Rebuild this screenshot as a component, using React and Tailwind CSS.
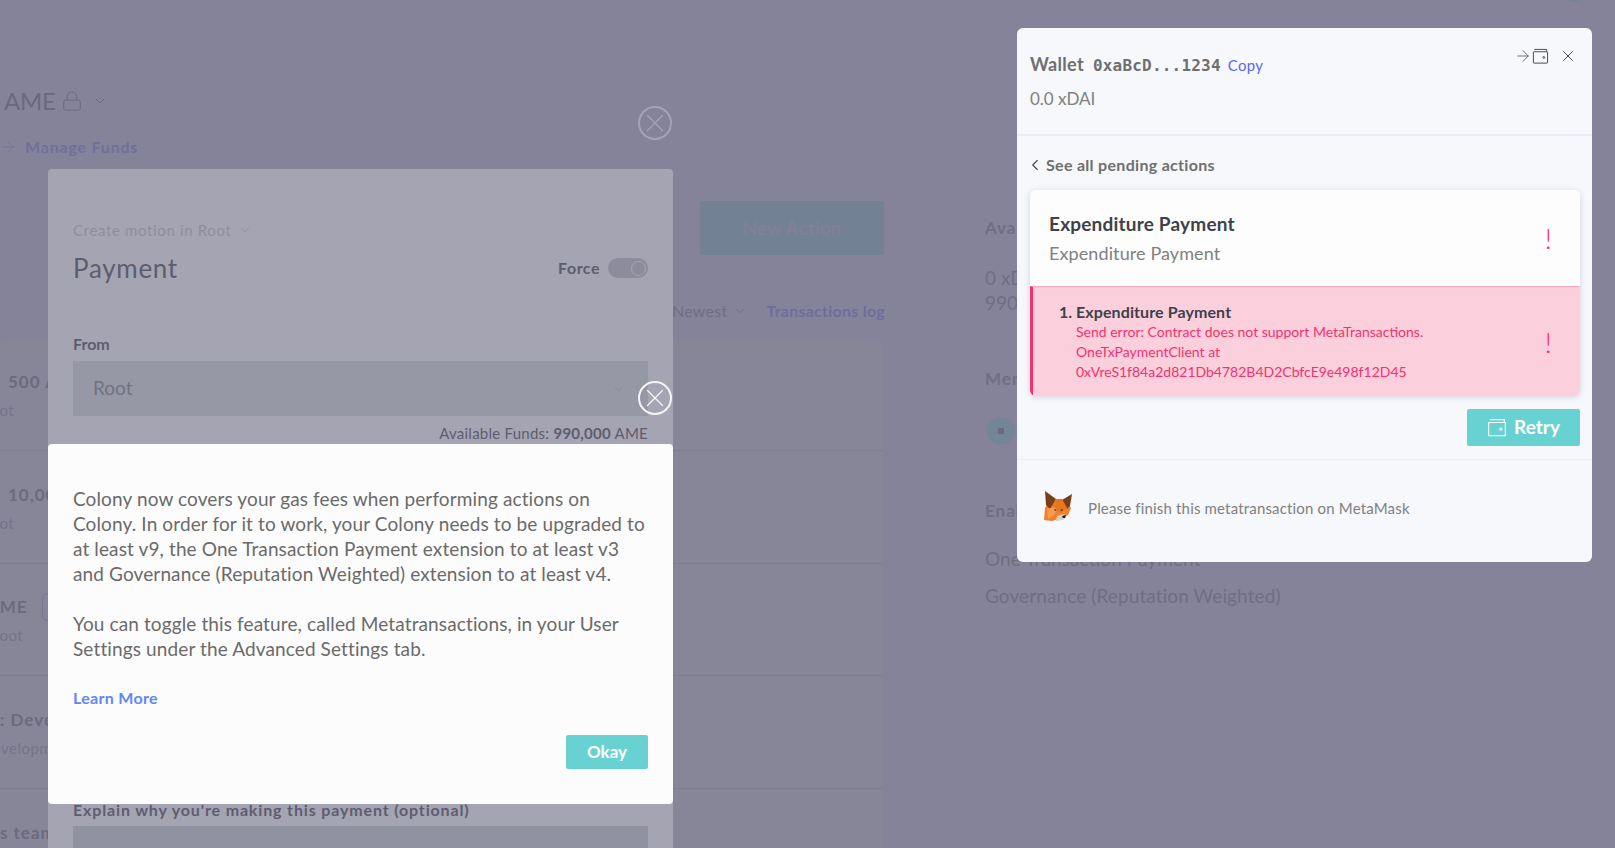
import React from "react";
import { ArrowRight, ChevronDown, ChevronLeft, Lock, X } from "lucide-react";

const font = "font-['Lato','Noto_Sans',sans-serif]";

const WalletIcon = ({ className }) => (
  <svg viewBox="0 0 18 18" fill="none" stroke="currentColor" strokeWidth="1" className={className}>
    <path d="M2.5 1.5h13v2.5" />
    <rect x="1.5" y="4" width="15" height="12" rx="0.5" />
    <circle cx="12.5" cy="10" r="1" />
  </svg>
);

const FoxLogo = () => (
  <svg viewBox="0 0 30 31" className="w-[30px] h-[31px] shrink-0">
    <path d="M1 30l1-12 4-6 9-3 9 3 4 6-3 7-5 3-5 1-6 2z" fill="#f0802c" />
    <path d="M2 1l11 8-6 10-4-4z" fill="#7a3e17" />
    <path d="M29 4l-10 6 5 9 3-3z" fill="#7a3e17" />
    <path d="M13 9h6l5 9-6 5-4-3-5-3z" fill="#e8761f" />
    <path d="M4 19l7-2 3 3-3 5-6 4z" fill="#f79a4b" />
    <path d="M14 26l7-2 3 2-4 4-7 1z" fill="#d9cfc4" />
    <path d="M19 26l4-1-1 3-2 0z" fill="#1c1c1c" />
    <path d="M11 19l3 1-2 1zM20 19l-3 1 2 1z" fill="#333333" />
  </svg>
);

const CloseCircle = ({ className }) => (
  <button className={`absolute left-[638px] w-[34px] h-[34px] rounded-full border-2 flex items-center justify-center ${className}`}>
    <X className="w-[30px] h-[30px] shrink-0" strokeWidth={1} />
  </button>
);

const Row = ({ children, sub, subClass, className }) => (
  <div className={`shrink-0 border-b border-[#7f7d92] bg-[#878698] ${className}`}>
    <div className="flex items-center h-[22px] text-[17px] font-bold tracking-[1px] text-[#6c6a7e] whitespace-nowrap">{children}</div>
    <p className={`mt-[6px] h-[22px] text-[15px] leading-[22px] tracking-[0.5px] text-[#757389] whitespace-nowrap ${subClass}`}>{sub}</p>
  </div>
);

const Page = () => (
  <div className="flex">
    <div className="w-[883px] shrink-0 pt-[86px] flex flex-col">
      <div className="flex items-center pl-[4px] h-[30px] text-[24px] tracking-[-0.3px] text-[#6b697d]">
        <span>AME</span>
        <Lock className="w-[22px] h-[22px] ml-[5px]" strokeWidth={1} />
        <ChevronDown className="w-[16px] h-[16px] ml-[9px]" strokeWidth={1.5} />
      </div>
      <div className="flex items-center gap-[8px] mt-[19px] h-[24px] text-[16px] tracking-[0.8px] font-bold text-[#70709a]">
        <ArrowRight className="w-[18px] h-[18px] -ml-[1px]" strokeWidth={1} />
        <span>Manage Funds</span>
      </div>
      <div className="flex justify-end mt-[42px]">
        <div className="w-[184px] h-[54px] -mr-[1px] rounded-[3px] bg-[#738195] flex items-center justify-center text-[19px] font-bold text-[#81809a]">
          New Action
        </div>
      </div>
      <div className="flex justify-end items-center mt-[44px] h-[24px] text-[16px] tracking-[0.25px] -mr-[2px]">
        <span className="text-[#706e83]">Newest</span>
        <ChevronDown className="w-[14px] h-[14px] ml-[6px] text-[#706e83]" strokeWidth={1.5} />
        <span className="ml-[19px] font-bold text-[#6e6e9e]">Transactions log</span>
      </div>
      <div className="mt-[18px] flex flex-col rounded-t-[6px] overflow-hidden">
        <Row className="h-[110px] pt-[30px]" sub="Root" subClass="-ml-[19px]">
          <span className="ml-[8px]">500 AME</span>
        </Row>
        <Row className="h-[113px] pt-[33px]" sub="Root" subClass="-ml-[19px]">
          <span className="ml-[8px]">10,000 AME</span>
        </Row>
        <Row className="h-[112px] pt-[32px]" sub="Root" subClass="-ml-[10px]">
          <span className="-ml-[13px]">AME</span>
          <span className="ml-[14px] w-[40px] h-[28px] rounded-[6px] border border-[#74739c]" />
        </Row>
        <Row className="h-[113px] pt-[33px]" sub="Development" subClass="-ml-[19px]">
          <span>: Development</span>
        </Row>
        <Row className="h-[60px] pt-[33px] border-b-0" sub="" subClass="">
          <span>s team</span>
        </Row>
      </div>
    </div>
    <div className="pl-[102px] pt-[216px] flex flex-col text-[#706e83]">
      <p className="text-[17px] leading-[24px] tracking-[1px] font-bold">Available Funds</p>
      <p className="mt-[25px] text-[19px] leading-[25px]">0 xDAI</p>
      <p className="text-[19px] leading-[25px]">990,000 AME</p>
      <p className="mt-[52px] text-[17px] leading-[24px] tracking-[1px] font-bold">Members</p>
      <div className="mt-[26px] ml-[2px] w-[28px] h-[28px] rounded-full bg-[#74859a] flex items-center justify-center">
        <div className="w-[6px] h-[6px] bg-[#6b697d]" />
      </div>
      <p className="mt-[54px] text-[17px] leading-[24px] tracking-[1px] font-bold">Enabled Extensions</p>
      <p className="mt-[23px] text-[19px] leading-[26px] tracking-[0.1px]">One Transaction Payment</p>
      <p className="mt-[11px] text-[19px] leading-[26px] tracking-[0.1px]">Governance (Reputation Weighted)</p>
    </div>
  </div>
);

const BackModal = () => (
  <div className="absolute left-[48px] top-[169px] w-[625px] h-[700px] rounded-t-[4px] bg-[#a5a4b2] px-[25px] pt-[51px]">
    <div className="flex items-center h-[20px] text-[15px] tracking-[0.65px] text-[#8f8e9e]">
      <span>Create motion in Root</span>
      <ChevronDown className="w-[14px] h-[14px] ml-[6px]" strokeWidth={1.5} />
    </div>
    <div className="flex items-center justify-between mt-[10px] h-[36px]">
      <h2 className="text-[26px] text-[#5e5d70] tracking-[0.7px]">Payment</h2>
      <div className="flex items-center gap-[8px]">
        <span className="text-[16px] tracking-[0.5px] font-bold text-[#5e5d70]">Force</span>
        <div className="w-[40px] h-[20px] rounded-full bg-[#8d8c9d] flex items-center justify-end pr-[2px]">
          <div className="w-[15px] h-[15px] rounded-full border border-[#a5a4b2]" />
        </div>
      </div>
    </div>
    <p className="mt-[46px] text-[16px] leading-[24px] font-bold text-[#5e5d70]">From</p>
    <div className="mt-[5px] h-[55px] bg-[#9798a6] flex items-center justify-between px-[20px]">
      <span className="text-[19px] text-[#727183]">Root</span>
      <ChevronDown className="w-[14px] h-[14px] text-[#85848f] mr-[2px]" strokeWidth={1.5} />
    </div>
    <p className="mt-[8px] text-right text-[15px] tracking-[0.25px] leading-[18px] text-[#5e5d70]">
      Available Funds: <span className="font-bold">990,000</span> AME
    </p>
    <p className="mt-[356px] text-[16px] tracking-[0.85px] leading-[24px] font-bold text-[#5e5d70]">Explain why you&apos;re making this payment (optional)</p>
    <div className="mt-[4px] h-[60px] bg-[#9192a1]" />
  </div>
);

const FrontModal = () => (
  <div className="absolute left-[48px] top-[444px] w-[625px] h-[360px] rounded-[4px] bg-[#fcfcfc] px-[25px] pt-[42px]">
    <p className="text-[19px] tracking-[0.12px] leading-[25px] text-[#6b6a6a] whitespace-nowrap">
      Colony now covers your gas fees when performing actions on
      <br />
      Colony. In order for it to work, your Colony needs to be upgraded to
      <br />
      at least v9, the One Transaction Payment extension to at least v3
      <br />
      and Governance (Reputation Weighted) extension to at least v4.
    </p>
    <p className="mt-[25px] text-[19px] tracking-[0.12px] leading-[25px] text-[#6b6a6a] whitespace-nowrap">
      You can toggle this feature, called Metatransactions, in your User
      <br />
      Settings under the Advanced Settings tab.
    </p>
    <p className="mt-[25px] text-[16px] tracking-[0.3px] leading-[24px] font-bold text-[#5f88f5]">Learn More</p>
    <div className="flex justify-end mt-[25px]">
      <button className="w-[82px] h-[34px] rounded-[2px] bg-[#68d2d2] text-[17px] font-bold text-white">Okay</button>
    </div>
  </div>
);

const WalletPanel = () => (
  <div className="absolute left-[1017px] top-[28px] w-[575px] h-[534px] rounded-[6px] bg-[#f6f8fc] flex flex-col">
    <div className="h-[108px] shrink-0 border-b-2 border-[#e9eef5] px-[13px] pt-[23px] relative">
      <div className="flex items-baseline h-[24px] text-[#6f6f6f]">
        <span className="text-[18px] font-bold tracking-[0.3px]">Wallet</span>
        <span className="ml-[9px] font-['DejaVu_Sans_Mono',monospace] text-[16px] tracking-[0.2px] font-bold">0xaBcD...1234</span>
        <span className="ml-[7px] text-[15px] tracking-[0.3px] text-[#5a6af5]">Copy</span>
      </div>
      <p className="mt-[12px] text-[17px] leading-[24px] text-[#808080]">0.0 xDAI</p>
      <div className="absolute right-[15px] top-[19px] flex items-center text-[#444444]">
        <ArrowRight className="w-[18px] h-[18px]" strokeWidth={1} />
        <WalletIcon className="w-[17px] h-[17px]" />
        <X className="w-[18px] h-[18px] ml-[10px]" strokeWidth={1.3} />
      </div>
    </div>
    <div className="pl-[13px] pr-[12px] pt-[20px] flex flex-col">
      <div className="flex items-center h-[20px] -mt-[1px] text-[16px] tracking-[0.3px] font-bold text-[#6f6f6f]">
        <ChevronLeft className="w-[18px] h-[18px] -ml-[4px] mr-[2px] text-[#444444]" strokeWidth={1.5} />
        <span>See all pending actions</span>
      </div>
      <div className="mt-[15px] rounded-[6px] overflow-hidden shadow-[0_1px_6px_rgba(80,90,110,0.22)]">
        <div className="h-[96px] bg-[#fdfdfd] pl-[19px] pr-[28px] flex items-center justify-between">
          <div>
            <p className="text-[19px] tracking-[0.2px] leading-[24px] font-bold text-[#3e4149]">Expenditure Payment</p>
            <p className="mt-[5px] text-[18px] tracking-[0.1px] leading-[24px] text-[#808080]">Expenditure Payment</p>
          </div>
          <span className="text-[28px] font-light text-[#ff2a6d]">!</span>
        </div>
        <div className="h-[110px] border-t border-[#ffa6c0] border-l-[3px] border-l-[#f8306c] bg-[#fccfdd] pl-[26px] pr-[28px] flex items-center justify-between">
          <div className="flex">
            <span className="text-[16px] leading-[20px] font-bold text-[#3e4149] w-[17px] shrink-0">1.</span>
            <div>
              <p className="text-[16px] tracking-[0.1px] leading-[20px] font-bold text-[#3e4149]">Expenditure Payment</p>
              <p className="text-[14px] leading-[20px] text-[#f8306c]">Send error: Contract does not support MetaTransactions.</p>
              <p className="text-[14px] leading-[20px] text-[#f8306c]">OneTxPaymentClient at</p>
              <p className="text-[14px] leading-[20px] text-[#f8306c]">0xVreS1f84a2d821Db4782B4D2CbfcE9e498f12D45</p>
            </div>
          </div>
          <span className="text-[28px] font-light text-[#ff2a6d]">!</span>
        </div>
      </div>
      <div className="flex justify-end mt-[13px]">
        <button className="w-[113px] h-[37px] rounded-[2px] bg-[#68d2d2] flex items-center justify-center gap-[7px] text-[19px] font-bold text-white">
          <WalletIcon className="w-[20px] h-[20px]" />
          Retry
        </button>
      </div>
    </div>
    <div className="mt-[13px] border-t border-[#e9eef5] flex items-center pl-[26px] pt-[30px]">
      <FoxLogo />
      <span className="ml-[15px] mt-[6px] text-[15px] tracking-[0.17px] text-[#808080]">Please finish this metatransaction on MetaMask</span>
    </div>
  </div>
);

export default function App() {
  return (
    <div className={`relative w-[1615px] h-[848px] overflow-hidden bg-[#858399] ${font}`}>
      <Page />
      <div className="absolute left-[1565px] -top-[28px] w-[18px] h-[30px] rounded-full bg-[#74859a]" />
      <BackModal />
      <CloseCircle className="top-[106px] border-[#a5a4b2] text-[#a5a4b2]" />
      <FrontModal />
      <CloseCircle className="top-[381px] border-[#f5f5f5] text-[#f5f5f5]" />
      <WalletPanel />
    </div>
  );
}
